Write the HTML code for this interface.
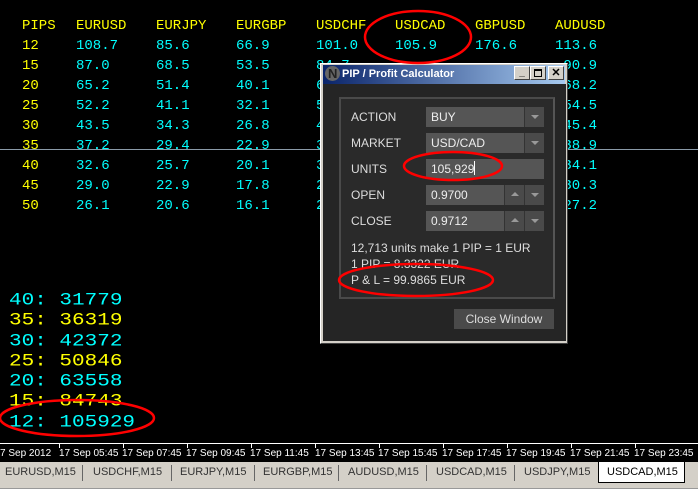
<!DOCTYPE html>
<html><head><meta charset="utf-8"><style>
*{margin:0;padding:0;box-sizing:border-box}
body{width:698px;height:492px;background:#000;position:relative;overflow:hidden;font-family:"Liberation Sans",sans-serif}
.m{position:absolute;font-family:"Liberation Mono",monospace;font-size:14px;line-height:20px;white-space:pre}
.y{color:#ffff00}.c{color:#00ffff}
.b{position:absolute;font-family:"Liberation Mono",monospace;font-size:21px;line-height:20px;white-space:pre;left:9px;transform:scaleY(0.82);transform-origin:0 50%}
.a{position:absolute;font-size:12px;color:#ddd}
.f{position:absolute;left:426px;width:118px;height:20px;background:#555;color:#eee;font-size:12px;line-height:20px;padding-left:5px}
.btn{position:absolute;top:0;width:20px;height:20px;background:#4a4a4a;border-left:1px solid #333}
.dn:after{content:"";position:absolute;left:6px;top:8px;border-left:4px solid transparent;border-right:4px solid transparent;border-top:4px solid #999}
.up:after{content:"";position:absolute;left:6px;top:7px;border-left:4px solid transparent;border-right:4px solid transparent;border-bottom:4px solid #999}
.t{position:absolute;top:448px;font-size:10px;color:#fff;font-family:"Liberation Sans",sans-serif;white-space:nowrap}
.tk{position:absolute;top:444px;width:1px;height:4px;background:#fff}
.tab{position:absolute;top:466px;font-size:11px;color:#333}
.sep{position:absolute;top:465px;width:1px;height:16px;background:#666}
</style></head><body>
<div class="m y" style="left:22px;top:16px">PIPS
12
15
20
25
30
35
40
45
50</div>
<div class="m" style="left:76px;top:16px"><span class="y">EURUSD</span><span class="c">
108.7
87.0
65.2
52.2
43.5
37.2
32.6
29.0
26.1</span></div>
<div class="m" style="left:156px;top:16px"><span class="y">EURJPY</span><span class="c">
85.6
68.5
51.4
41.1
34.3
29.4
25.7
22.9
20.6</span></div>
<div class="m" style="left:236px;top:16px"><span class="y">EURGBP</span><span class="c">
66.9
53.5
40.1
32.1
26.8
22.9
20.1
17.8
16.1</span></div>
<div class="m" style="left:316px;top:16px"><span class="y">USDCHF</span><span class="c">
101.0
84.7
63.5
50.8
42.3
36.3
31.8
28.2
25.4</span></div>
<div class="m" style="left:395px;top:16px"><span class="y">USDCAD</span><span class="c">
105.9</span></div>
<div class="m" style="left:475px;top:16px"><span class="y">GBPUSD</span><span class="c">
176.6</span></div>
<div class="m" style="left:555px;top:16px"><span class="y">AUDUSD</span><span class="c">
113.6
 90.9
 68.2
 54.5
 45.4
 38.9
 34.1
 30.3
 27.2</span></div>
<div style="position:absolute;left:0;top:149px;width:698px;height:1px;background:#8a9aa8"></div>

<div class="b c" style="top:291px">40: 31779</div>
<div class="b y" style="top:311px">35: 36319</div>
<div class="b c" style="top:332px">30: 42372</div>
<div class="b y" style="top:352px">25: 50846</div>
<div class="b c" style="top:372px">20: 63558</div>
<div class="b y" style="top:392px">15: 84743</div>
<div class="b c" style="top:413px">12: 105929</div>

<!-- dialog -->
<div style="position:absolute;left:320px;top:63px;width:248px;height:281px;background:#d4d0c8;border:1px solid #fff;border-right-color:#404040;border-bottom-color:#404040"></div>
<div style="position:absolute;left:323px;top:65px;width:242px;height:19px;background:linear-gradient(90deg,#0a246a,#a6caf0)"></div>
<div style="position:absolute;left:325px;top:66px;width:15px;height:15px;border-radius:50%;background:#666"></div>
<div style="position:absolute;left:328px;top:67px;color:#222;font-size:13px;font-weight:bold;line-height:13px">N</div>
<div style="position:absolute;left:342px;top:66px;color:#fff;font-size:11px;font-weight:bold;line-height:17px">PIP / Profit Calculator</div>
<div style="position:absolute;left:514px;top:66px;width:16px;height:14px;background:#d4d0c8;border:1px solid #fff;border-right-color:#404040;border-bottom-color:#404040;font-size:10px;font-weight:bold;line-height:12px;text-align:center">_</div>
<div style="position:absolute;left:530px;top:66px;width:16px;height:14px;background:#d4d0c8;border:1px solid #fff;border-right-color:#404040;border-bottom-color:#404040"><div style="margin:2px 3px;width:8px;height:8px;border:1px solid #000;border-top-width:2px"></div></div>
<div style="position:absolute;left:548px;top:66px;width:16px;height:14px;background:#d4d0c8;border:1px solid #fff;border-right-color:#404040;border-bottom-color:#404040;font-size:11px;font-weight:bold;line-height:12px;text-align:center">✕</div>
<div style="position:absolute;left:323px;top:84px;width:243px;height:257px;background:#252525"></div>
<div style="position:absolute;left:339px;top:97px;width:216px;height:202px;border:2px solid #4a4a4a;border-right-color:#555;background:#2a2a2a"></div>
<div class="a" style="left:351px;top:110px">ACTION</div>
<div class="a" style="left:351px;top:136px">MARKET</div>
<div class="a" style="left:351px;top:162px">UNITS</div>
<div class="a" style="left:351px;top:188px">OPEN</div>
<div class="a" style="left:351px;top:214px">CLOSE</div>
<div class="f" style="top:107px">BUY<div class="btn dn" style="right:0"></div></div>
<div class="f" style="top:133px">USD/CAD<div class="btn dn" style="right:0"></div></div>
<div class="f" style="top:159px">105,929<span style="display:inline-block;width:1px;height:14px;background:#fff;vertical-align:-2px"></span></div>
<div class="f" style="top:185px">0.9700<div class="btn up" style="right:20px"></div><div class="btn dn" style="right:0"></div></div>
<div class="f" style="top:211px">0.9712<div class="btn up" style="right:20px"></div><div class="btn dn" style="right:0"></div></div>
<div class="a" style="left:351px;top:240px;line-height:16px">12,713 units make 1 PIP = 1 EUR<br>1 PIP = 8.3322 EUR<br>P &amp; L = 99.9865 EUR</div>
<div style="position:absolute;left:454px;top:309px;width:100px;height:20px;background:#4a4a4a;color:#ddd;font-size:12px;line-height:20px;text-align:center">Close Window</div>

<!-- ruler -->
<div style="position:absolute;left:0;top:443px;width:698px;height:1px;background:#fff"></div>
<div class="tk" style="left:59px"></div><div class="tk" style="left:123px"></div><div class="tk" style="left:187px"></div><div class="tk" style="left:251px"></div><div class="tk" style="left:315px"></div><div class="tk" style="left:379px"></div><div class="tk" style="left:443px"></div><div class="tk" style="left:507px"></div><div class="tk" style="left:571px"></div><div class="tk" style="left:635px"></div>
<div class="t" style="left:0">7 Sep 2012</div>
<div class="t" style="left:59px">17 Sep 05:45</div>
<div class="t" style="left:122px">17 Sep 07:45</div>
<div class="t" style="left:186px">17 Sep 09:45</div>
<div class="t" style="left:250px">17 Sep 11:45</div>
<div class="t" style="left:315px">17 Sep 13:45</div>
<div class="t" style="left:378px">17 Sep 15:45</div>
<div class="t" style="left:442px">17 Sep 17:45</div>
<div class="t" style="left:506px">17 Sep 19:45</div>
<div class="t" style="left:570px">17 Sep 21:45</div>
<div class="t" style="left:634px">17 Sep 23:45</div>

<!-- tabs -->
<div style="position:absolute;left:0;top:462px;width:698px;height:30px;background:#d4d0c8"></div>
<div class="tab" style="left:5px">EURUSD,M15</div><div class="sep" style="left:82px"></div>
<div class="tab" style="left:93px">USDCHF,M15</div><div class="sep" style="left:171px"></div>
<div class="tab" style="left:180px">EURJPY,M15</div><div class="sep" style="left:254px"></div>
<div class="tab" style="left:263px">EURGBP,M15</div><div class="sep" style="left:338px"></div>
<div class="tab" style="left:348px">AUDUSD,M15</div><div class="sep" style="left:426px"></div>
<div class="tab" style="left:436px">USDCAD,M15</div><div class="sep" style="left:514px"></div>
<div class="tab" style="left:524px">USDJPY,M15</div>
<div style="position:absolute;left:598px;top:462px;width:87px;height:21px;background:#fff;border:1px solid #000;border-top:none"></div>
<div class="tab" style="left:607px;color:#000">USDCAD,M15</div>
<div style="position:absolute;left:0;top:488px;width:698px;height:4px;background:#fff;border-top:1px solid #999"></div>

<!-- red ellipses -->
<svg style="position:absolute;left:0;top:0" width="698" height="492">
<g fill="none" stroke="#f00" stroke-width="2.5">
<ellipse cx="418" cy="37" rx="53" ry="26"/>
<ellipse cx="453" cy="166" rx="49" ry="14"/>
<ellipse cx="416" cy="280" rx="77" ry="16"/>
<ellipse cx="77" cy="418" rx="77" ry="18"/>
</g></svg>
</body></html>
